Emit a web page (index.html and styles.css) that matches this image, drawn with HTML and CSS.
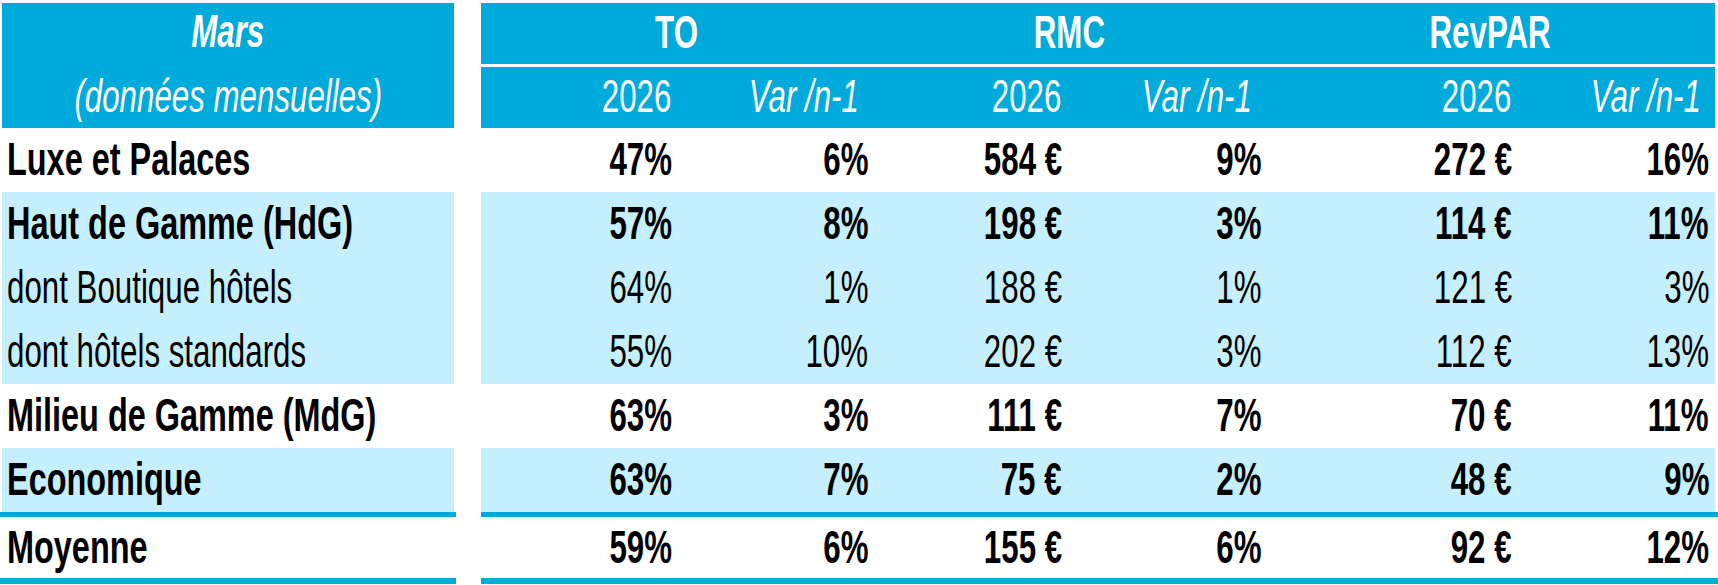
FILE: index.html
```html
<!DOCTYPE html>
<html lang="fr">
<head>
<meta charset="utf-8">
<title>Mars - données mensuelles</title>
<link rel="stylesheet" href="styles.css">
</head>
<body>
<div class="sheet">
  <div class="head">
    <div class="head-label">
      <div class="hl-top"><span class="t b i">Mars</span></div>
      <div class="hl-bot"><span class="t i">(données mensuelles)</span></div>
    </div>
    <div class="head-data">
      <div class="hrow">
        <div class="hc span2"><span class="t b">TO</span></div>
        <div class="hc span2"><span class="t b">RMC</span></div>
        <div class="hc span2"><span class="t b">RevPAR</span></div>
      </div>
      <div class="hrow">
        <div class="num yr"><span class="t">2026</span></div>
        <div class="num var"><span class="t i">Var /n-1</span></div>
        <div class="num yr"><span class="t">2026</span></div>
        <div class="num var"><span class="t i">Var /n-1</span></div>
        <div class="num yr"><span class="t">2026</span></div>
        <div class="num var"><span class="t i">Var /n-1</span></div>
      </div>
    </div>
  </div>

  <div class="row b">
    <div class="label"><span class="t">Luxe et Palaces</span></div>
    <div class="cells">
      <div class="num"><span class="t">47%</span></div>
      <div class="num"><span class="t">6%</span></div>
      <div class="num"><span class="t">584&nbsp;€</span></div>
      <div class="num"><span class="t">9%</span></div>
      <div class="num"><span class="t">272&nbsp;€</span></div>
      <div class="num"><span class="t">16%</span></div>
    </div>
  </div>

  <div class="row alt b">
    <div class="label"><span class="t">Haut de Gamme (HdG)</span></div>
    <div class="cells">
      <div class="num"><span class="t">57%</span></div>
      <div class="num"><span class="t">8%</span></div>
      <div class="num"><span class="t">198&nbsp;€</span></div>
      <div class="num"><span class="t">3%</span></div>
      <div class="num"><span class="t">114&nbsp;€</span></div>
      <div class="num"><span class="t">11%</span></div>
    </div>
  </div>

  <div class="row alt">
    <div class="label"><span class="t">dont Boutique hôtels</span></div>
    <div class="cells">
      <div class="num"><span class="t">64%</span></div>
      <div class="num"><span class="t">1%</span></div>
      <div class="num"><span class="t">188&nbsp;€</span></div>
      <div class="num"><span class="t">1%</span></div>
      <div class="num"><span class="t">121&nbsp;€</span></div>
      <div class="num"><span class="t">3%</span></div>
    </div>
  </div>

  <div class="row alt">
    <div class="label"><span class="t">dont hôtels standards</span></div>
    <div class="cells">
      <div class="num"><span class="t">55%</span></div>
      <div class="num"><span class="t">10%</span></div>
      <div class="num"><span class="t">202&nbsp;€</span></div>
      <div class="num"><span class="t">3%</span></div>
      <div class="num"><span class="t">112&nbsp;€</span></div>
      <div class="num"><span class="t">13%</span></div>
    </div>
  </div>

  <div class="row b">
    <div class="label"><span class="t">Milieu de Gamme (MdG)</span></div>
    <div class="cells">
      <div class="num"><span class="t">63%</span></div>
      <div class="num"><span class="t">3%</span></div>
      <div class="num"><span class="t">111&nbsp;€</span></div>
      <div class="num"><span class="t">7%</span></div>
      <div class="num"><span class="t">70&nbsp;€</span></div>
      <div class="num"><span class="t">11%</span></div>
    </div>
  </div>

  <div class="row alt b">
    <div class="label"><span class="t">Economique</span></div>
    <div class="cells">
      <div class="num"><span class="t">63%</span></div>
      <div class="num"><span class="t">7%</span></div>
      <div class="num"><span class="t">75&nbsp;€</span></div>
      <div class="num"><span class="t">2%</span></div>
      <div class="num"><span class="t">48&nbsp;€</span></div>
      <div class="num"><span class="t">9%</span></div>
    </div>
  </div>

  <div class="rule"><div class="rule-l"></div><div class="rule-r"></div></div>

  <div class="row total b">
    <div class="label"><span class="t">Moyenne</span></div>
    <div class="cells">
      <div class="num"><span class="t">59%</span></div>
      <div class="num"><span class="t">6%</span></div>
      <div class="num"><span class="t">155&nbsp;€</span></div>
      <div class="num"><span class="t">6%</span></div>
      <div class="num"><span class="t">92&nbsp;€</span></div>
      <div class="num"><span class="t">12%</span></div>
    </div>
  </div>

  <div class="rule thick"><div class="rule-l"></div><div class="rule-r"></div></div>
</div>
</body>
</html>
```

FILE: styles.css
```css
* { box-sizing: border-box; }

html, body {
  margin: 0;
  padding: 0;
  background: #ffffff;
}

body {
  font-family: "Liberation Sans", Arial, sans-serif;
  font-size: 46px;
  color: #000000;
  width: 1718px;
  height: 585px;
  overflow: hidden;
}

.sheet {
  padding-top: 3px;
  width: 1718px;
}

/* text run, condensed like Arial Narrow */
.t {
  display: inline-block;
  white-space: nowrap;
  line-height: 46px;
  transform: scaleX(0.68);
  flex: none;
}

.b { font-weight: bold; }
.i { font-style: italic; }
.b .t { font-weight: bold; }

/* ---------- header ---------- */
.head {
  display: flex;
  height: 125px;
}

.head-label {
  margin-left: 2px;
  width: 452px;
  background: #00aadb;
  color: #ffffff;
  display: flex;
  flex-direction: column;
}

.hl-top {
  height: 61px;
  display: flex;
  align-items: center;
  justify-content: center;
  padding-bottom: 5px;
}

.hl-bot {
  height: 64px;
  display: flex;
  align-items: center;
  justify-content: center;
  padding-top: 3px;
  padding-bottom: 4px;
}

.head-label .t { transform-origin: center center; }

.head-data {
  margin-left: 27px;
  width: 1234px;
  display: flex;
  flex-direction: column;
  gap: 3px;
}

.hrow {
  height: 61px;
  background: #00aadb;
  color: #ffffff;
  display: grid;
  grid-template-columns: 196px 196px 194px 199px 251px 198px;
}

.span2 { grid-column: span 2; }

.hc {
  display: flex;
  align-items: center;
  justify-content: center;
  padding-bottom: 4px;
}

.hc .t { transform-origin: center center; }

.hrow .num { padding-bottom: 4px; }
.hrow .yr { padding-right: 6px; }
.hrow .var { padding-right: 14px; }

/* ---------- body rows ---------- */
.row {
  display: flex;
  height: 64px;
}

.row.total { height: 61px; }

.label {
  margin-left: 2px;
  width: 452px;
  padding-left: 5px;
  padding-bottom: 2px;
  display: flex;
  align-items: center;
}

.label .t { transform-origin: left center; }
.row.b .label .t { transform: scaleX(0.705); }

.cells {
  margin-left: 27px;
  width: 1234px;
  display: grid;
  grid-template-columns: 196px 196px 194px 199px 251px 198px;
}

.row.alt .label,
.row.alt .cells { background: #c6effd; }

.num {
  display: flex;
  align-items: center;
  justify-content: flex-end;
  padding-right: 5px;
  padding-bottom: 2px;
}

.cells .num:last-child { padding-right: 6px; }

.num .t { transform-origin: right center; }

/* ---------- rules ---------- */
.rule {
  display: flex;
  height: 5px;
}

.rule.thick { height: 6px; }

.rule-l {
  width: 456px;
  background: #00aadb;
}

.rule-r {
  margin-left: 25px;
  flex: 1;
  background: #00aadb;
}
```
